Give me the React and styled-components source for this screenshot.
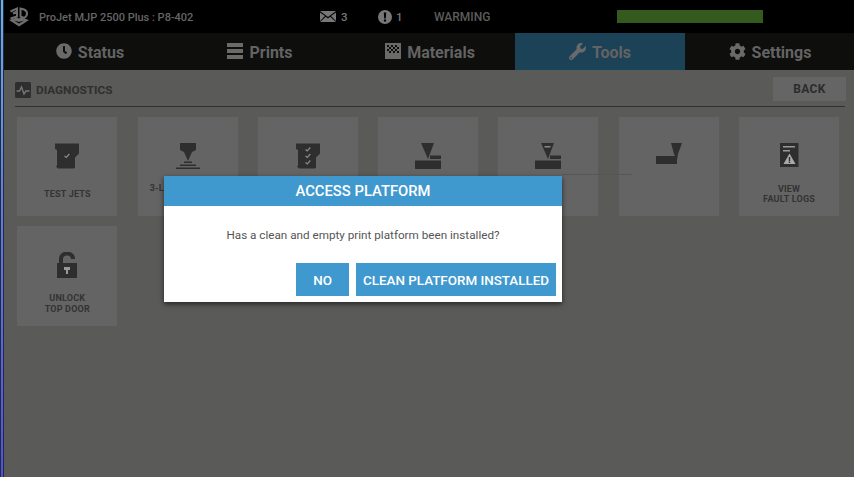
import React from "react";
import styled, { createGlobalStyle } from "styled-components";
import { FaClock, FaWrench, FaCog } from "react-icons/fa";

const Global = createGlobalStyle`
  html, body { margin: 0; padding: 0; background: #000; overflow: hidden; }
  #root { height: 477px; }
  * { box-sizing: border-box; }
`;

const Screen = styled.div`
  position: relative;
  width: 854px;
  height: 477px;
  display: flex;
  font-family: Roboto, "Liberation Sans", sans-serif;
  overflow: hidden;
`;
const Edge = styled.div`
  width: 4px;
  flex: none;
  background: #2a2a2a;
  display: flex;
  padding-left: 1px;
  padding-right: 1px;
`;
const EdgeLine = styled.div`
  flex: 1;
  background: linear-gradient(#5fb0ff 0%, #5a80f0 40%, #4a50f0 100%);
`;
const Main = styled.div`
  flex: 1;
  display: flex;
  flex-direction: column;
  min-width: 0;
`;
const TopBar = styled.div`
  height: 33px;
  background: #000;
  display: flex;
  align-items: center;
  color: #666;
`;
const Logo = styled.svg`
  width: 22px;
  height: 22px;
  margin-left: 4px;
  flex: none;
`;
const PrinterName = styled.span`
  margin-left: 9px;
  width: 281px;
  padding-top: 1px;
  font-size: 11px;
  font-weight: 500;
`;
const Stat = styled.span`
  display: flex;
  align-items: center;
  gap: ${(p) => p.$gap}px;
  width: ${(p) => p.$w}px;
  padding-top: 1px;
  font-size: 11.5px;
  font-weight: 500;
  color: #777;
  svg { fill: #777; flex: none; margin-top: -1px; }
`;
const StateLabel = styled.span`
  width: 183px;
  padding-top: 1px;
  font-size: 12px;
  font-weight: 500;
  color: #5c5c5c;
`;
const Progress = styled.div`
  width: 146px;
  height: 13px;
  background: #355a1e;
`;
const Tabs = styled.div`
  height: 37px;
  background: #0e0e0d;
  display: flex;
  padding-left: 1px;
`;
const Tab = styled.div`
  width: 170px;
  flex: none;
  display: flex;
  align-items: center;
  justify-content: center;
  gap: 6px;
  padding-top: 1px;
  font-size: 16px;
  font-weight: 700;
  color: #636363;
  background: ${(p) => (p.$active ? "#1c4258" : "transparent")};
  svg { fill: #6a6a6a; flex: none; margin-top: -2px; }
`;
const Body = styled.div`
  flex: 1;
  background: #5a5a58;
  padding: 7px 9px 0 11px;
  display: flex;
  flex-direction: column;
`;
const Header = styled.div`
  height: 30px;
  display: flex;
  align-items: center;
  justify-content: space-between;
  border-bottom: 1px solid #2f2f2f;
`;
const Title = styled.div`
  display: flex;
  align-items: center;
  gap: 5px;
  font-size: 11.8px;
  font-weight: 700;
  color: #2f2f2f;
  margin-top: -3px;
`;
const BackButton = styled.div`
  width: 73px;
  height: 24px;
  background: #656565;
  display: flex;
  align-items: center;
  justify-content: center;
  font-size: 12px;
  font-weight: 700;
  letter-spacing: 0.4px;
  color: #2c2c2c;
  margin-top: -5px;
  margin-right: -1px;
`;
const Grid = styled.div`
  margin-top: 9.8px;
  margin-left: 2.3px;
  display: grid;
  grid-template-columns: repeat(7, 100px);
  grid-auto-rows: 99.5px;
  column-gap: 20.3px;
  row-gap: 10px;
`;
const Tile = styled.div`
  background: #646464;
  display: flex;
  flex-direction: column;
  align-items: center;
  padding-top: 26px;
  color: #333;
  font-size: 9px;
  font-weight: 700;
  letter-spacing: 0.2px;
  line-height: 10.5px;
  text-align: center;
  svg { fill: #2e2e2e; flex: none; }
`;
const TileLabel = styled.div`
  margin-top: ${(p) => p.$top ?? 14}px;
  white-space: nowrap;
`;
const GhostLine = styled.div`
  position: absolute;
  left: 562px;
  top: 174px;
  width: 70px;
  height: 1px;
  background: #565654;
`;
const Dialog = styled.div`
  position: absolute;
  left: 164px;
  top: 176px;
  width: 398px;
  height: 126px;
  background: #fff;
  box-shadow: 0 2px 5px rgba(0, 0, 0, 0.6);
  display: flex;
  flex-direction: column;
`;
const DialogHead = styled.div`
  height: 30px;
  background: #3f99cf;
  color: #fff;
  font-size: 14.8px;
  font-weight: 500;
  display: flex;
  align-items: center;
  justify-content: center;
`;
const DialogText = styled.div`
  margin-top: 21px;
  text-align: center;
  font-size: 11.7px;
  line-height: 16px;
  color: #555;
`;
const DialogActions = styled.div`
  margin-top: 20px;
  display: flex;
  justify-content: flex-end;
  gap: 7px;
  padding-right: 6px;
`;
const DialogButton = styled.div`
  width: ${(p) => p.$w}px;
  height: 33px;
  background: #3f99cf;
  color: #fff;
  font-size: 13.4px;
  font-weight: 500;
  display: flex;
  align-items: center;
  justify-content: center;
  padding-top: 1px;
`;

const Icon3D = () => (
  <Logo viewBox="0 0 22 22">
    <g fill="none" stroke="#6e6e6e" strokeWidth="2">
      <path d="M2.500 5.500 9 2.500v3L5 7.500l4-1v4L2.500 12.500" />
      <path d="M12.500 2.500v8l3.500 1.500c4-2 4-7 0-8.500z" />
    </g>
    <path d="M1 14l8-2.500 2 1 2-1 8 2.500-10 6.500zM6 14.500l5 3 5-3-5 1.500z" fill="#6e6e6e" fillRule="evenodd" />
  </Logo>
);
const Mail = () => (
  <svg width="16" height="11" viewBox="0 0 16 11">
    <path d="M0 0h16L8 6zM0 1.500 5 5 0 10zM16 1.500 11 5l5 5zM5.800 5.800 8 7.400l2.200-1.600L16 11H0z" />
  </svg>
);
const Alert = () => (
  <svg width="14" height="14" viewBox="0 0 14 14">
    <path fillRule="evenodd" d="M7 0a7 7 0 1 0 0 14A7 7 0 0 0 7 0zM5.800 2.500h2.400L7.800 8.400H6.200zM5.900 9.500h2.200v2H5.900z" />
  </svg>
);
const Lines = () => (
  <svg width="16" height="16" viewBox="0 0 16 16">
    <path d="M0 0h16v4H0zM0 6h16v4H0zM0 12h16v4H0z" />
  </svg>
);
const Checker = () => (
  <svg width="16" height="16" viewBox="0 0 16 16">
    <path fillRule="evenodd" d="M0 0h16v16H0zM2 2v2h2V2zM6 2v2h2V2zM10 2v2h2V2zM4 4v2h2V4zM8 4v2h2V4zM12 4v2h2V4zM2 6v2h2V6zM6 6v2h2V6zM10 6v2h2V6zM4 8v2h2V8zM8 8v2h2V8zM12 8v2h2V8z" />
  </svg>
);
const Pulse = () => (
  <svg width="16" height="16" viewBox="0 0 16 16">
    <rect width="16" height="16" rx="1.500" fill="#2e2e2e" />
    <path d="M1.500 9h3l2-4 2.500 7 2-3h3.500" fill="none" stroke="#777" strokeWidth="1.400" />
  </svg>
);
const CARTRIDGE = "M0 .5h24v10l-4 4v10l-1 1H3l-1-1-1-1 1-1V7L0 6z";
const Cartridge = ({ checks }) => (
  <svg width="24" height="26" viewBox="0 0 24 26">
    <path d={CARTRIDGE} />
    {checks.map((y) => (
      <path key={y} d={`M9.500 ${y}l1.800 1.500 3-3.500`} fill="none" stroke="#8a8a8a" strokeWidth="1.200" />
    ))}
  </svg>
);
const ThreeLayer = () => (
  <svg width="26" height="26" viewBox="0 0 26 26">
    <path d="M5 0h16v7l-4 2-4 9-4-9-4-2zM9 18.500h8V20H9zM5 21.500h16V23H5zM1 24.500h24V26H1z" />
  </svg>
);
const Nozzle = ({ mark }) => (
  <svg width="26" height="26" viewBox="0 0 26 26">
    <path d="M6 0h13l-6 16zM15 12.500h11v3.500H15zM0 17.500h26V26H0z" />
    {mark && <path d="M9.500 3h6v1.500h-6z" fill="#888" />}
  </svg>
);
const Corner = () => (
  <svg width="26" height="22" viewBox="0 0 26 22">
    <path d="M15 0h11l-4 11-1 6v4H0v-8h19l-1-2z" />
  </svg>
);
const FaultLog = () => (
  <svg width="19" height="24" viewBox="0 0 19 24">
    <path d="M0 0h18.500v24H0z" />
    <path d="M3 3h12v1.500H3zM3 7h7v1.500H3z" fill="#999" />
    <path d="M9.500 10.500 15.500 21h-12z" fill="#aaa" />
    <path d="M8.800 14h1.400v4H8.800zM8.800 18.600h1.400v1.400H8.800z" fill="#2e2e2e" />
  </svg>
);
const Unlock = () => (
  <svg width="20" height="26" viewBox="0 0 20 26">
    <path d="M0 11h20v15H0zM2 11V7a8 7 0 0 1 16-1v1h-4V7a4 3.500 0 0 0-8 0v4z" />
    <path d="M7 15h6v3h-2v4H9v-4H7z" fill="#999" />
  </svg>
);

export default function App() {
  return (
    <Screen>
      <Global />
      <Edge>
        <EdgeLine />
      </Edge>
      <Main>
        <TopBar>
          <Icon3D />
          <PrinterName>ProJet MJP 2500 Plus : P8-402</PrinterName>
          <Stat $w={58} $gap={5}><Mail />3</Stat>
          <Stat $w={56} $gap={4}><Alert />1</Stat>
          <StateLabel>WARMING</StateLabel>
          <Progress />
        </TopBar>
        <Tabs>
          <Tab><FaClock size={16} />Status</Tab>
          <Tab><Lines />Prints</Tab>
          <Tab><Checker />Materials</Tab>
          <Tab $active><FaWrench size={17} />Tools</Tab>
          <Tab><FaCog size={17} />Settings</Tab>
        </Tabs>
        <Body>
          <Header>
            <Title><Pulse />DIAGNOSTICS</Title>
            <BackButton>BACK</BackButton>
          </Header>
          <Grid>
            <Tile><Cartridge checks={[13]} /><TileLabel $top={20}>TEST JETS</TileLabel></Tile>
            <Tile><ThreeLayer /><TileLabel $top={14}>3-LAYER SAMPLE</TileLabel></Tile>
            <Tile><Cartridge checks={[6.500, 13, 19.500]} /></Tile>
            <Tile><Nozzle /></Tile>
            <Tile><Nozzle mark /></Tile>
            <Tile><Corner /></Tile>
            <Tile><FaultLog /><TileLabel $top={17}>VIEW<br />FAULT LOGS</TileLabel></Tile>
            <Tile><Unlock /><TileLabel $top={15}>UNLOCK<br />TOP DOOR</TileLabel></Tile>
          </Grid>
        </Body>
      </Main>
      <GhostLine />
      <Dialog>
        <DialogHead>ACCESS PLATFORM</DialogHead>
        <DialogText>Has a clean and empty print platform been installed?</DialogText>
        <DialogActions>
          <DialogButton $w={53}>NO</DialogButton>
          <DialogButton $w={200}>CLEAN PLATFORM INSTALLED</DialogButton>
        </DialogActions>
      </Dialog>
    </Screen>
  );
}
